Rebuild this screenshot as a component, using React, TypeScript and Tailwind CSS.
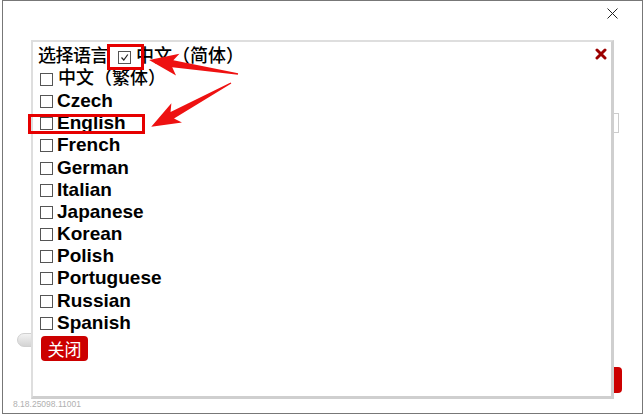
import React from "react";

const languages = [
  "Czech",
  "English",
  "French",
  "German",
  "Italian",
  "Japanese",
  "Korean",
  "Polish",
  "Portuguese",
  "Russian",
  "Spanish",
];

const cjk = { fontFamily: '"Liberation Serif", "Noto Sans CJK SC", serif' };

function Box({ checked }: { checked?: boolean }) {
  return (
    <span className="inline-flex items-center justify-center w-[13px] h-[13px] border border-[#555] shrink-0">
      {checked && (
        <svg width="9" height="9" viewBox="0 0 9 9">
          <path d="M1.5 4.5 L3.8 7 L7.8 1.5" fill="none" stroke="#222" strokeWidth="1.2" />
        </svg>
      )}
    </span>
  );
}

function Arrow({ x, y, angle, len }: { x: number; y: number; angle: number; len: number }) {
  const L = len;
  const pts = `0,-0.7 ${L - 24},-3.6 ${L - 29},-11 ${L},0 ${L - 29},11 ${L - 24},3.6 0,0.7`;
  return <polygon points={pts} fill="#ee1111" transform={`translate(${x} ${y}) rotate(${angle})`} />;
}

export default function App() {
  return (
    <div
      className="relative w-[644px] h-[416px] bg-white overflow-hidden"
      style={{ fontFamily: '"Liberation Sans", Arial, sans-serif' }}
    >
      {/* underlying dialog */}
      <div className="ml-[2px] w-[641px] h-[414px] border border-[#777] flex flex-col">
        <div className="flex justify-end pt-[7px] pr-[24px]">
          <svg width="11" height="11" viewBox="0 0 11 11">
            <path d="M0.5 0.5 L10.5 10.5 M10.5 0.5 L0.5 10.5" stroke="#222" strokeWidth="1" />
          </svg>
        </div>
        <div className="mt-[94px] self-end mr-[23px] w-[500px] h-[20px] border border-[#ccc]" />
        <div className="mt-[200px] ml-[14px] w-[40px] h-[14px] rounded-full bg-gradient-to-b from-[#f2f2f2] to-[#d4d4d4] border border-[#d0d0d0]" />
        <div className="mt-[20px] self-end mr-[20px] w-[80px] h-[26px] rounded-[4px] bg-[#cc0000]" />
        <div className="mt-auto mb-[4px] ml-[10px] text-[8.5px] leading-[10px] text-[#b0b0b0]">8.18.25098.11001</div>
      </div>

      {/* language popup */}
      <div className="absolute left-[31px] top-[40px] w-[583px] h-[359px] bg-white border-2 border-[#dedede] border-r-[3px] border-b-[3px] border-r-[#cfcfcf] border-b-[#cfcfcf] pl-[5px] pt-[3px]">
        <div className="flex items-center h-[22.2px] text-[18px] text-black font-medium" style={cjk}>
          <span className="tracking-[-0.5px]">选择语言</span>
          <span className="ml-[10px] mr-[5px] mt-[2px] flex">
            <Box checked />
          </span>
          <span>中文（简体）</span>
          <svg className="ml-auto mr-[4px] -mt-[4px]" width="12" height="12" viewBox="0 0 12 12">
            <path d="M2 2 L10 10 M10 2 L2 10" stroke="#9c0000" strokeWidth="3" strokeLinecap="round" />
          </svg>
        </div>
        <div className="flex items-center h-[22.2px] text-[18px] text-black font-medium" style={cjk}>
          <span className="ml-[2px] mr-[5px] mt-[2px] flex">
            <Box />
          </span>
          <span>中文（繁体）</span>
        </div>
        {languages.map((l) => (
          <div key={l} className="flex items-center h-[22.2px]">
            <span className="ml-[2px] mr-[4px] mt-[2px] flex">
              <Box />
            </span>
            <span className="text-[19px] font-bold text-black leading-none">{l}</span>
          </div>
        ))}
        <button className="mt-[3px] ml-[3px] w-[47px] h-[25px] rounded-[4px] bg-[#cc0000] text-white text-[17px] leading-none flex items-center justify-center" style={{ fontFamily: '"Noto Sans CJK SC", sans-serif' }}>
          关闭
        </button>
      </div>

      {/* annotations */}
      <div className="absolute left-[107px] top-[44px] w-[37px] h-[26px] border-[3px] border-[#e60000]" />
      <div className="absolute left-[28px] top-[114px] w-[117px] h-[20px] border-[3px] border-[#e60000]" />
      <svg className="absolute left-0 top-0" width="644" height="416">
        <Arrow x={238} y={74} angle={188.9} len={90} />
        <Arrow x={231} y={83} angle={151.2} len={91} />
      </svg>
    </div>
  );
}
